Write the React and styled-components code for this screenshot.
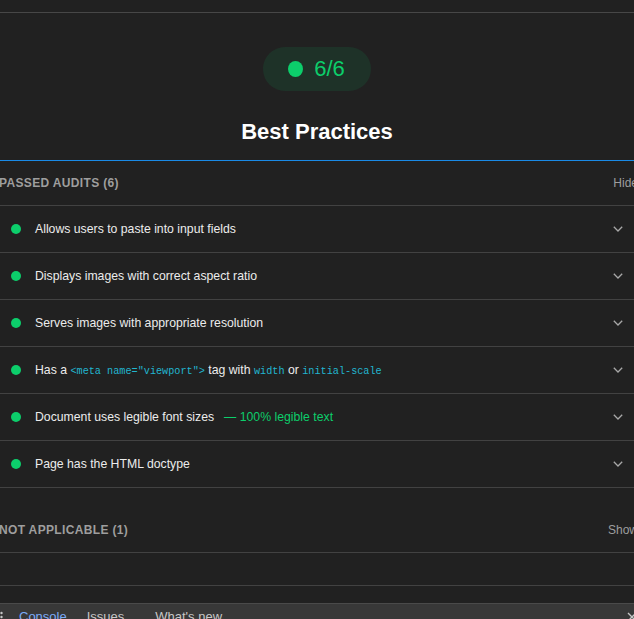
import React from 'react'
import styled, { createGlobalStyle } from 'styled-components'

const GlobalStyle = createGlobalStyle`
  html, body {
    margin: 0;
    background: #212121;
    overflow: hidden;
  }
  body {
    font-family: "Liberation Sans", Arial, sans-serif;
    color: #e8e8e8;
  }
`

const Page = styled.div`
  display: flex;
  flex-direction: column;
  height: 100vh;
  overflow: hidden;
`

const TopRule = styled.div`
  height: 12px;
  flex-shrink: 0;
  border-bottom: 1px solid #474747;
`

const Gauge = styled.section`
  display: flex;
  flex-direction: column;
  align-items: center;
  padding-top: 34px;
  padding-bottom: 14px;
  border-bottom: 1px solid #1a8ae6;
`

const Pill = styled.div`
  display: flex;
  align-items: center;
  gap: 11px;
  height: 44px;
  padding: 0 26px 0 25px;
  border-radius: 22px;
  background: rgba(12, 206, 107, 0.1);
  color: #0cce6b;
  font-size: 22px;
  line-height: 1;
`

const PillDot = styled.span`
  width: 15px;
  height: 16px;
  border-radius: 50%;
  background: #0cce6b;
`

const Title = styled.h2`
  margin: 27px 0 0;
  font-size: 22px;
  line-height: 28px;
  font-weight: 700;
  color: #ffffff;
`

const GroupHeader = styled.div`
  display: flex;
  flex-shrink: 0;
  align-items: center;
  justify-content: space-between;
  height: 44px;
  margin-top: ${({ $spaced }) => ($spaced ? '20px' : '0')};
  border-bottom: 1px solid #424242;
  font-size: 12px;
`

const GroupTitle = styled.span`
  margin-left: -1px;
  font-weight: 700;
  letter-spacing: 0.35px;
  text-transform: uppercase;
  color: #9e9e9e;
`

const Toggle = styled.span`
  margin-right: -4px;
  color: #9e9e9e;
`

const Row = styled.div`
  display: flex;
  flex-shrink: 0;
  align-items: center;
  height: 46px;
  padding: 0 11px;
  border-bottom: 1px solid #424242;
  font-size: 12.25px;
`

const Dot = styled.span`
  flex-shrink: 0;
  width: 10px;
  height: 10px;
  border-radius: 50%;
  background: #0cce6b;
  margin-right: 14px;
`

const Label = styled.span`
  flex: 1;
  white-space: nowrap;
  color: #ececec;
`

const Code = styled.code`
  font-family: "Liberation Mono", "DejaVu Sans Mono", monospace;
  font-size: 10.2px;
  color: #21b6d0;
`

const Extra = styled.span`
  margin-left: 10px;
  color: #0cce6b;
`

const Empty = styled.div`
  flex-shrink: 0;
  height: 32px;
  border-bottom: 1px solid #424242;
`

const Spacer = styled.div`
  flex-shrink: 0;
  height: 17px;
`

const Drawer = styled.div`
  display: flex;
  align-items: center;
  flex-shrink: 0;
  height: 25px;
  padding-left: 9px;
  position: relative;
  background: #383838;
  border-top: 1px solid #4a4a4a;
  font-size: 13px;
`

const Tab = styled.span`
  padding: 0 10px;
  margin-right: ${({ $extra }) => $extra || 0}px;
  color: ${({ $active }) => ($active ? '#7cacf8' : '#c7c7c7')};
`

const Kebab = styled.svg`
  position: absolute;
  left: 0;
  top: 7px;
`

const Close = styled.svg`
  position: absolute;
  left: 627px;
  top: 8px;
`

const Chevron = () => (
  <svg width="10" height="6" viewBox="0 0 10 6">
    <polyline points="0.8,0.8 5,5 9.2,0.8" fill="none" stroke="#a8a8a8" strokeWidth="1.3" />
  </svg>
)

const audits = [
  { id: 'paste', label: 'Allows users to paste into input fields' },
  { id: 'aspect', label: 'Displays images with correct aspect ratio' },
  { id: 'resolution', label: 'Serves images with appropriate resolution' },
  {
    id: 'viewport',
    label: (
      <>
        Has a <Code>&lt;meta name="viewport"&gt;</Code> tag with <Code>width</Code> or{' '}
        <Code>initial-scale</Code>
      </>
    ),
  },
  { id: 'fonts', label: 'Document uses legible font sizes', extra: '—  100% legible text' },
  { id: 'doctype', label: 'Page has the HTML doctype' },
]

const App = () => (
  <>
    <GlobalStyle />
    <Page>
      <TopRule />
      <Gauge>
        <Pill>
          <PillDot />
          6/6
        </Pill>
        <Title>Best Practices</Title>
      </Gauge>

      <GroupHeader>
        <GroupTitle>Passed audits (6)</GroupTitle>
        <Toggle>Hide</Toggle>
      </GroupHeader>
      {audits.map(a => (
        <Row key={a.id}>
          <Dot />
          <Label>
            {a.label}
            {a.extra && <Extra>{a.extra}</Extra>}
          </Label>
          <Chevron />
        </Row>
      ))}

      <GroupHeader $spaced>
        <GroupTitle>Not applicable (1)</GroupTitle>
        <Toggle>Show</Toggle>
      </GroupHeader>
      <Empty />
      <Spacer />

      <Drawer>
        <Kebab width="4" height="12" viewBox="0 0 4 12">
          <circle cx="1.5" cy="2" r="1.2" fill="#c7c7c7" />
          <circle cx="1.5" cy="6" r="1.2" fill="#c7c7c7" />
          <circle cx="1.5" cy="10" r="1.2" fill="#c7c7c7" />
        </Kebab>
        <Tab $active>Console</Tab>
        <Tab $extra={11}>Issues</Tab>
        <Tab>What's new</Tab>
        <Close width="10" height="10" viewBox="0 0 10 10">
          <path d="M1 1 L9 9 M9 1 L1 9" stroke="#c7c7c7" strokeWidth="1.4" />
        </Close>
      </Drawer>
    </Page>
  </>
)

export default App
